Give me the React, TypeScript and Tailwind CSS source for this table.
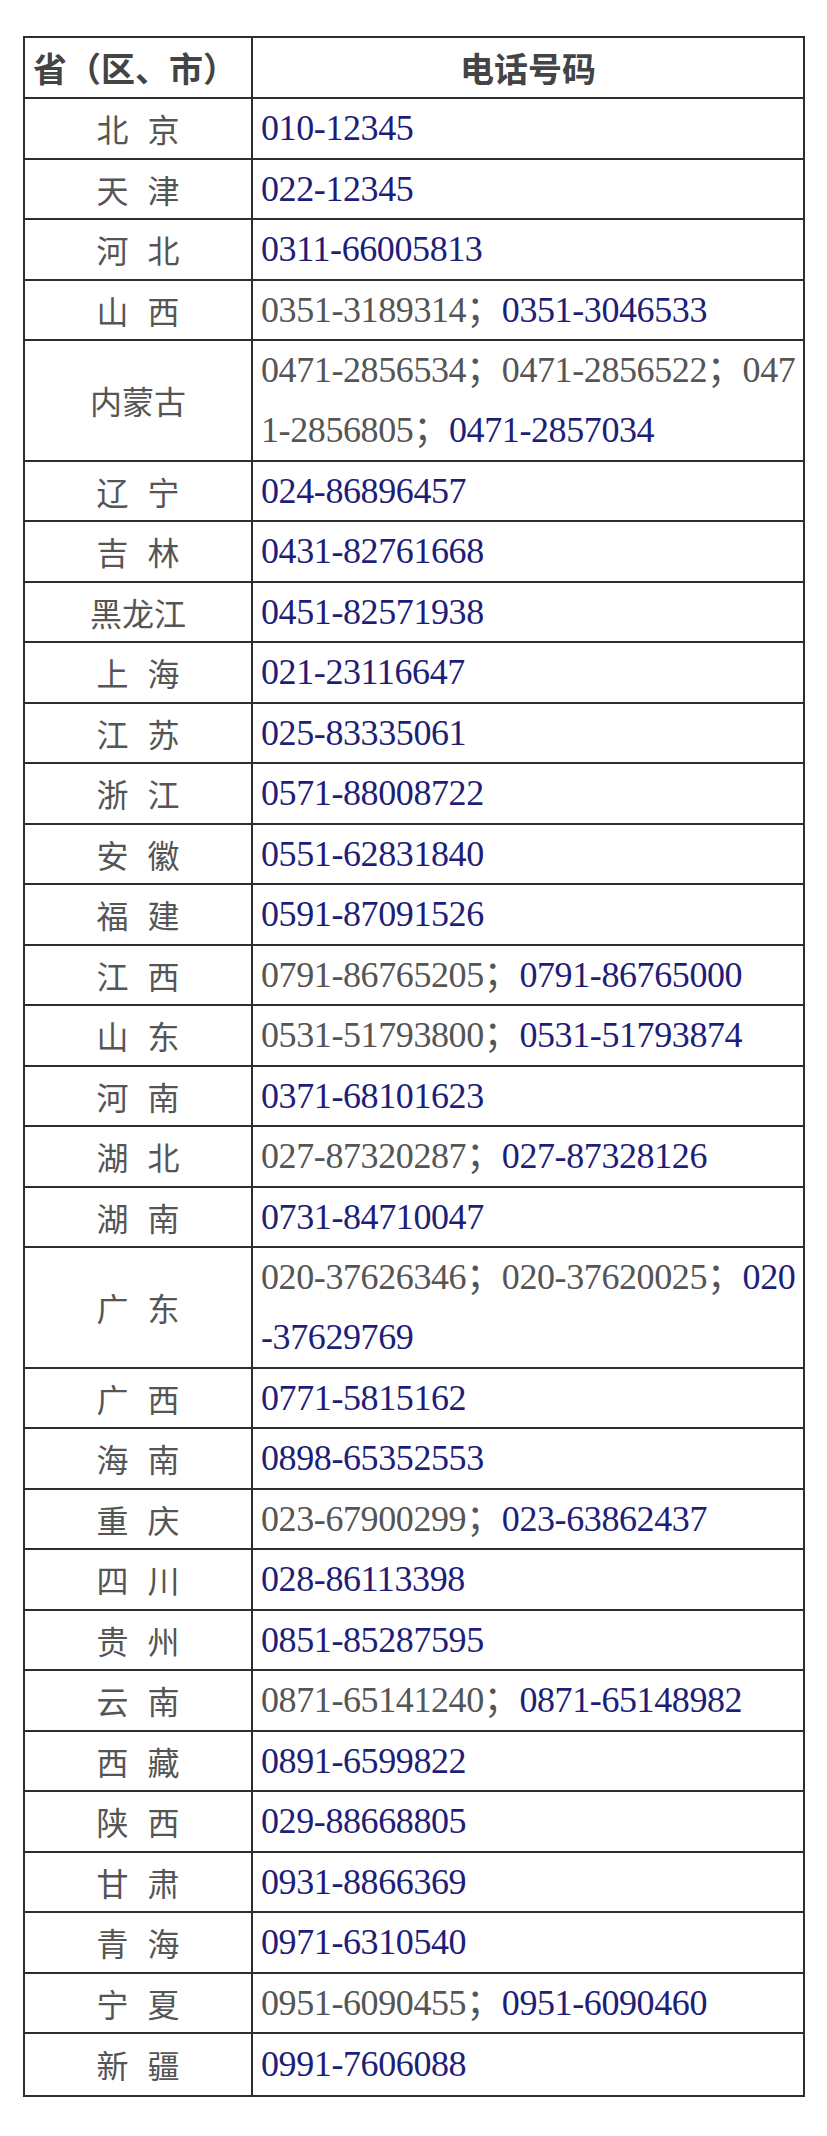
import React from "react";

type Seg = { t: string; blue?: boolean };
type Row = { name: string; lines: Seg[][] };

const B = (t: string): Seg => ({ t, blue: true });
const G = (t: string): Seg => ({ t });

const rows: Row[] = [
  { name: "北 京", lines: [[B("010-12345")]] },
  { name: "天 津", lines: [[B("022-12345")]] },
  { name: "河 北", lines: [[B("0311-66005813")]] },
  { name: "山 西", lines: [[G("0351-3189314；"), B("0351-3046533")]] },
  {
    name: "内蒙古",
    lines: [
      [G("0471-2856534；0471-2856522；047")],
      [G("1-2856805；"), B("0471-2857034")],
    ],
  },
  { name: "辽 宁", lines: [[B("024-86896457")]] },
  { name: "吉 林", lines: [[B("0431-82761668")]] },
  { name: "黑龙江", lines: [[B("0451-82571938")]] },
  { name: "上 海", lines: [[B("021-23116647")]] },
  { name: "江 苏", lines: [[B("025-83335061")]] },
  { name: "浙 江", lines: [[B("0571-88008722")]] },
  { name: "安 徽", lines: [[B("0551-62831840")]] },
  { name: "福 建", lines: [[B("0591-87091526")]] },
  { name: "江 西", lines: [[G("0791-86765205；"), B("0791-86765000")]] },
  { name: "山 东", lines: [[G("0531-51793800；"), B("0531-51793874")]] },
  { name: "河 南", lines: [[B("0371-68101623")]] },
  { name: "湖 北", lines: [[G("027-87320287；"), B("027-87328126")]] },
  { name: "湖 南", lines: [[B("0731-84710047")]] },
  {
    name: "广 东",
    lines: [
      [G("020-37626346；020-37620025；"), B("020")],
      [B("-37629769")],
    ],
  },
  { name: "广 西", lines: [[B("0771-5815162")]] },
  { name: "海 南", lines: [[B("0898-65352553")]] },
  { name: "重 庆", lines: [[G("023-67900299；"), B("023-63862437")]] },
  { name: "四 川", lines: [[B("028-86113398")]] },
  { name: "贵 州", lines: [[B("0851-85287595")]] },
  { name: "云 南", lines: [[G("0871-65141240；"), B("0871-65148982")]] },
  { name: "西 藏", lines: [[B("0891-6599822")]] },
  { name: "陕 西", lines: [[B("029-88668805")]] },
  { name: "甘 肃", lines: [[B("0931-8866369")]] },
  { name: "青 海", lines: [[B("0971-6310540")]] },
  { name: "宁 夏", lines: [[G("0951-6090455；"), B("0951-6090460")]] },
  { name: "新 疆", lines: [[B("0991-7606088")]] },
];

export default function App() {
  return (
    <div className="min-h-[2136px] w-[827px] bg-white pt-[36px] pl-[23px]">
      <div className="w-[782px] border-2 border-[#2e2e2e]">
        {/* header */}
        <div className="flex h-[61px] border-b-2 border-[#2e2e2e]">
          <div className="flex w-[228px] shrink-0 items-center border-r-2 border-[#2e2e2e] pl-[8px] font-['Noto_Sans_CJK_SC',sans-serif] text-[34px] font-bold text-[#444444]">
            省（区、市）
          </div>
          <div className="flex flex-1 items-center justify-center font-['Noto_Sans_CJK_SC',sans-serif] text-[34px] font-bold text-[#444444]">
            电话号码
          </div>
        </div>
        {rows.map((r, i) => {
          const last = i === rows.length - 1;
          const dbl = r.lines.length > 1;
          return (
            <div
              key={r.name}
              className={
                "flex " +
                (dbl ? "h-[120.5px] " : "h-[60.5px] ") +
                (last ? "" : "border-b-2 border-[#2e2e2e]")
              }
            >
              <div className="flex w-[228px] shrink-0 items-center justify-center border-r-2 border-[#2e2e2e] font-['Noto_Sans_CJK_SC',sans-serif] text-[32px] text-[#555555] [word-spacing:12px]">
                {r.name}
              </div>
              <div className="flex flex-1 flex-col justify-center pl-[8px] font-['Liberation_Serif','Noto_Sans_CJK_SC',serif] text-[36px] leading-[60px] tracking-[-0.4px] whitespace-nowrap">
                {r.lines.map((ln, j) => (
                  <div key={j}>
                    {ln.map((s, k) => (
                      <span
                        key={k}
                        className={s.blue ? "text-[#1e1e78]" : "text-[#555555]"}
                      >
                        {s.t}
                      </span>
                    ))}
                  </div>
                ))}
              </div>
            </div>
          );
        })}
      </div>
    </div>
  );
}
